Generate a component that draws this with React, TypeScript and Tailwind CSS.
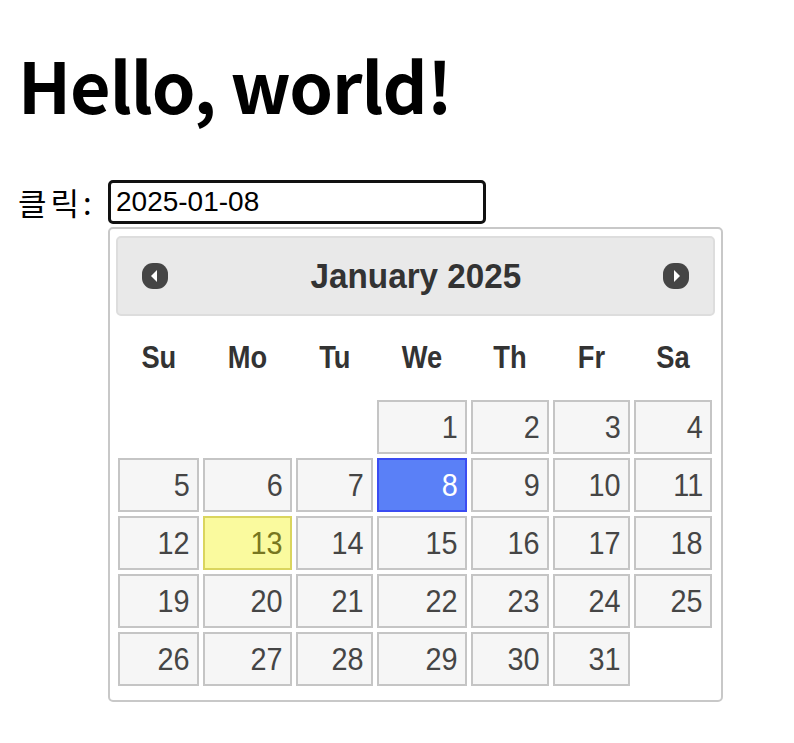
const weekdays = ['Su', 'Mo', 'Tu', 'We', 'Th', 'Fr', 'Sa']

// January 2025 starts on Wednesday
const cells: (number | null)[] = [null, null, null]
for (let d = 1; d <= 31; d++) cells.push(d)

function NavIcon({ dir }: { dir: 'prev' | 'next' }) {
  return (
    <svg width="28" height="28" viewBox="0 0 28 28">
      <rect x="1" y="1" width="26" height="26" rx="11" fill="#454545" />
      {dir === 'prev' ? (
        <path d="M16 8 L10 14 L16 20 Z" fill="#ffffff" />
      ) : (
        <path d="M12 8 L18 14 L12 20 Z" fill="#ffffff" />
      )}
    </svg>
  )
}

function DayCell({ day }: { day: number | null }) {
  if (day === null) return <div />
  let cls = 'border-[#c5c5c5] bg-[#f6f6f6] text-[#454545]'
  if (day === 8) cls = 'border-[#3a4cf2] bg-[#5a80f7] text-white'
  if (day === 13) cls = 'border-[#dad55e] bg-[#fafa9e] text-[#777620]'
  return (
    <div className={`h-[54px] border-2 flex items-center justify-end pr-[7px] text-[32px] ${cls}`}>
      <span className="inline-block scale-x-[0.9] origin-right">{day}</span>
    </div>
  )
}

export default function App() {
  return (
    <div className="min-h-screen bg-white px-[18px] pt-[34px] text-black font-['Noto_Sans_CJK_KR',sans-serif]">
      <h1 className="text-[70px] font-bold leading-[100px] tracking-[-1px]">Hello, world!</h1>

      <div className="mt-[46px] flex items-start">
        <span className="w-[90px] shrink-0 text-[31px] leading-[43px] tracking-[4px]">클릭:</span>
        <div className="flex flex-col font-['Liberation_Sans',Arial,sans-serif]">
          <div className="w-[378px] h-[44px] border-[3px] border-[#111] rounded-[5px] px-[5px] flex items-center text-[28px] leading-none">
            2025-01-08
          </div>

          <div className="mt-[3px] w-[615px] h-[475px] border-2 border-[#c8c8c8] rounded-[5px] bg-white px-[6px] pt-[7px]">
            <div className="h-[80px] bg-[#e9e9e9] border-2 border-[#dddddd] rounded-[5px] flex items-center justify-between px-[23px]">
              <NavIcon dir="prev" />
              <span className="text-[35px] font-bold text-[#333333] inline-block scale-x-[0.95]">January 2025</span>
              <NavIcon dir="next" />
            </div>

            <div className="mx-[2px] grid grid-cols-[81px_89px_77px_90px_78px_77px_78px] gap-x-[4px]">
              {weekdays.map((w) => (
                <div key={w} className="h-[84px] flex items-center justify-center text-[31px] font-bold text-[#333333]">
                  <span className="inline-block scale-x-[0.88]">{w}</span>
                </div>
              ))}
            </div>

            <div className="mx-[2px] grid grid-cols-[81px_89px_77px_90px_78px_77px_78px] gap-x-[4px] gap-y-[4px]">
              {cells.map((d, i) => (
                <DayCell key={i} day={d} />
              ))}
            </div>
          </div>
        </div>
      </div>
    </div>
  )
}
